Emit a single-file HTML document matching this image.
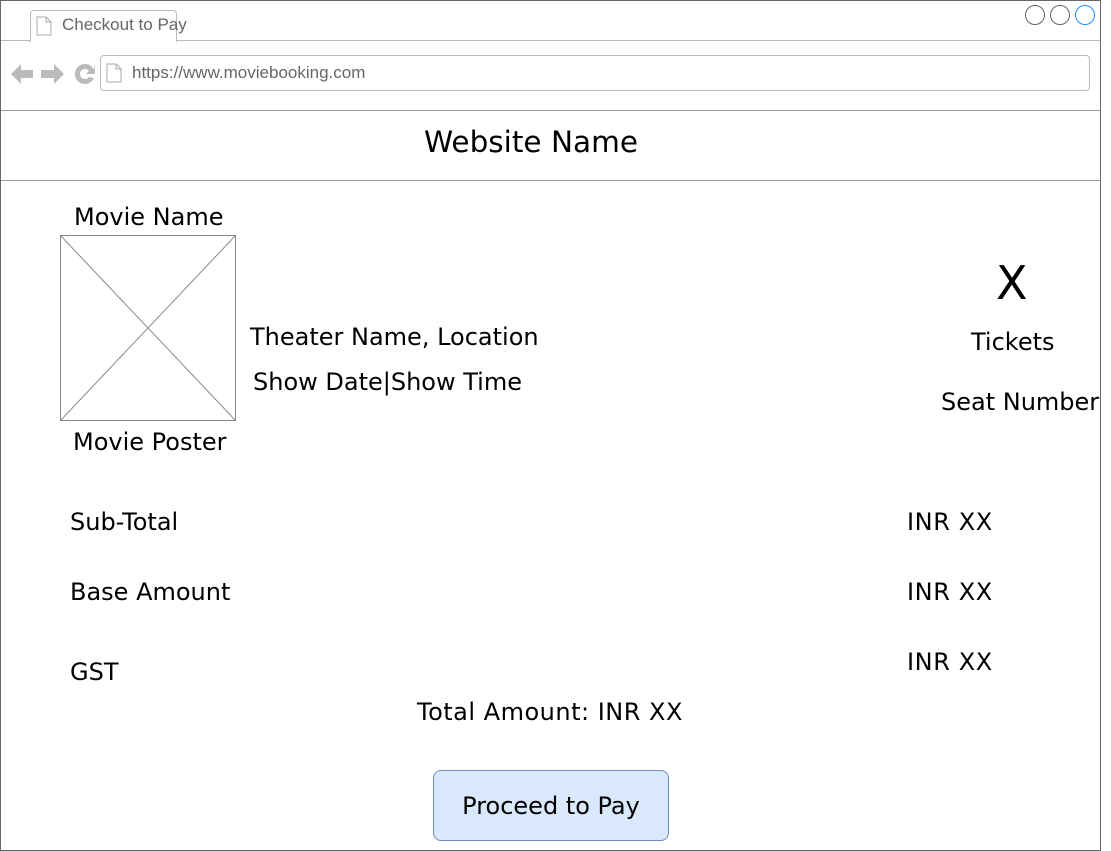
<!DOCTYPE html>
<html><head><meta charset="utf-8"><style>
body{margin:0;width:1111px;height:851px;background:#fff;position:relative;overflow:hidden;font-family:"DejaVu Sans",sans-serif;color:#000}
.a{position:absolute;white-space:nowrap}
.t{font-size:24px}
</style></head><body>
<div class="a" style="left:0;top:0;width:1099px;height:849px;border:1px solid #666"></div>
<div class="a" style="left:1px;top:40px;width:1099px;height:1px;background:#bbb"></div>
<div class="a" style="left:30px;top:10px;width:145px;height:31px;border:1px solid #bbb;border-bottom:none;border-radius:4px 4px 0 0;background:#fff"></div>
<svg class="a" style="left:36px;top:16px" width="16" height="20"><path d="M1 1h9l5 5v13H1z M10 1v5h5" fill="none" stroke="#aaa"/></svg>
<div class="a" style="left:62px;top:15px;font-size:17px;color:#666;font-family:'Liberation Sans',sans-serif">Checkout to Pay</div>
<svg class="a" style="left:1024px;top:5px" width="75" height="22"><circle cx="11" cy="10" r="9.5" fill="none" stroke="#666"/><circle cx="36" cy="10" r="9.5" fill="none" stroke="#666"/><circle cx="61" cy="10" r="9.5" fill="none" stroke="#1e90ff"/></svg>
<svg class="a" style="left:10px;top:62px" width="86" height="24"><path d="M1 12l10-10v6h12v8H11v6z" fill="#bbb"/><path d="M54 12L44 2v6H31v8h13v6z" fill="#bbb"/><path d="M84 8a10 10 0 1 0 0 8l-5-1a5 5 0 1 1 0-6l-3 3h9V3z" fill="#bbb"/></svg>
<div class="a" style="left:100px;top:55px;width:988px;height:34px;border:1px solid #bbb;border-radius:4px"></div>
<svg class="a" style="left:106px;top:63px" width="16" height="20"><path d="M1 1h9l5 5v13H1z M10 1v5h5" fill="none" stroke="#aaa"/></svg>
<div class="a" style="left:132px;top:63px;font-size:17px;color:#666;font-family:'Liberation Sans',sans-serif">https://www.moviebooking.com</div>
<div class="a" style="left:1px;top:110px;width:1099px;height:1px;background:#999"></div>
<div class="a" style="left:1px;top:180px;width:1099px;height:1px;background:#999"></div>
<div class="a" style="left:0;width:1062px;top:125px;text-align:center;font-size:29.5px">Website Name</div>
<div class="a t" style="left:74px;top:203px">Movie Name</div>
<svg class="a" style="left:60px;top:235px" width="176" height="186"><rect x=".5" y=".5" width="175" height="185" fill="#fff" stroke="#888"/><path d="M0 0L176 186M176 0L0 186" stroke="#888"/></svg>
<div class="a t" style="left:73px;top:428px">Movie Poster</div>
<div class="a t" style="left:250px;top:323px">Theater Name, Location</div>
<div class="a t" style="left:253px;top:368px">Show Date|Show Time</div>
<div class="a" style="left:996px;top:256px;font-size:46px">X</div>
<div class="a t" style="left:971px;top:328px">Tickets</div>
<div class="a t" style="left:941px;top:388px">Seat Number</div>
<div class="a t" style="left:70px;top:508px">Sub-Total</div>
<div class="a t" style="left:70px;top:578px">Base Amount</div>
<div class="a t" style="left:70px;top:658px">GST</div>
<div class="a t" style="left:907px;top:508px;letter-spacing:0.6px">INR XX</div>
<div class="a t" style="left:907px;top:578px;letter-spacing:0.6px">INR XX</div>
<div class="a t" style="left:907px;top:648px;letter-spacing:0.6px">INR XX</div>
<div class="a t" style="left:417px;top:698px;letter-spacing:0.5px">Total Amount: INR XX</div>
<div class="a" style="left:433px;top:770px;width:234px;height:69px;border:1px solid #6c8ebf;border-radius:8px;background:#dae8fc;font-size:24px;line-height:71px;text-align:center">Proceed to Pay</div>
</body></html>
